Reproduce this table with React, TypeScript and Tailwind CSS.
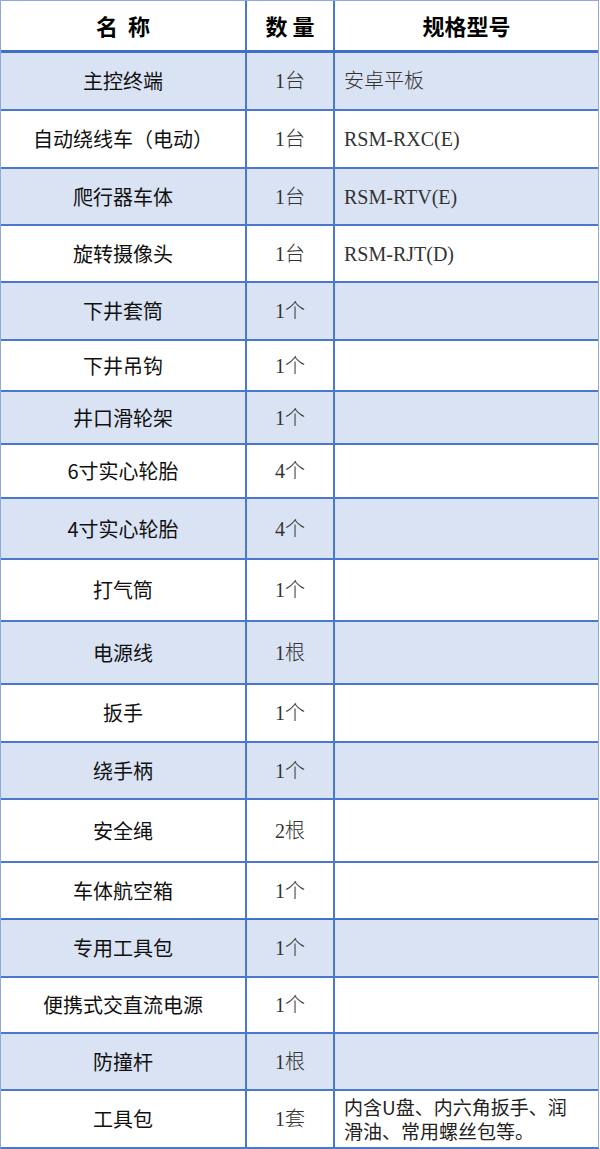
const rows: { name: string; qty: string; spec?: string; h: number; shade: boolean; thick?: boolean }[] = [
  { name: '主控终端', qty: '1台', spec: '安卓平板', h: 58, shade: true },
  { name: '自动绕线车（电动）', qty: '1台', spec: 'RSM-RXC(E)', h: 58, shade: false },
  { name: '爬行器车体', qty: '1台', spec: 'RSM-RTV(E)', h: 57, shade: true },
  { name: '旋转摄像头', qty: '1台', spec: 'RSM-RJT(D)', h: 57, shade: false },
  { name: '下井套筒', qty: '1个', h: 58, shade: true },
  { name: '下井吊钩', qty: '1个', h: 51, shade: false },
  { name: '井口滑轮架', qty: '1个', h: 53, shade: true },
  { name: '6寸实心轮胎', qty: '4个', h: 54, shade: false },
  { name: '4寸实心轮胎', qty: '4个', h: 61, shade: true },
  { name: '打气筒', qty: '1个', h: 62, shade: false },
  { name: '电源线', qty: '1根', h: 63, shade: true },
  { name: '扳手', qty: '1个', h: 58, shade: false },
  { name: '绕手柄', qty: '1个', h: 57, shade: true },
  { name: '安全绳', qty: '2根', h: 63, shade: false },
  { name: '车体航空箱', qty: '1个', h: 57, shade: false },
  { name: '专用工具包', qty: '1个', h: 59, shade: true, thick: true },
  { name: '便携式交直流电源', qty: '1个', h: 56, shade: false },
  { name: '防撞杆', qty: '1根', h: 57, shade: true },
];

const sans = 'font-["Noto_Sans_CJK_SC","Noto_Sans",sans-serif]';

export default function App() {
  return (
    <div className="w-[600px] h-[1149px] bg-white">
      <div className="w-[599px] border-l border-r border-[#8eaadb] border-b-2 border-b-[#4a78cf]">
        {/* header */}
        <div className={`grid grid-cols-[246px_88px_1fr] h-[53px] border-t border-t-[#8eaadb] border-b-[3px] border-b-[#3f6fcb] ${sans}`}>
          <div className="flex items-center justify-center border-r-2 border-[#4a78cf] text-[22px] font-bold text-black">
            名&nbsp;&nbsp;称
          </div>
          <div className="flex items-center justify-center border-r-2 border-[#4a78cf] text-[22px] font-bold text-black">
            数 量
          </div>
          <div className="flex items-center justify-center text-[22px] font-bold text-black">
            规格型号
          </div>
        </div>

        {rows.map((r) => (
          <div
            key={r.name}
            style={{ height: r.h }}
            className={`grid grid-cols-[246px_88px_1fr] border-b-2 border-[#4a78cf] ${r.shade ? 'bg-[#dae3f3]' : 'bg-white'} ${
              r.thick ? 'border-t border-t-[#3f6fcb] -mt-px' : ''
            }`}
          >
            <div className={`flex items-center justify-center border-r-2 border-[#4a78cf] text-[20px] text-[#111] ${sans}`}>
              {r.name}
            </div>
            <div className='flex items-center justify-center border-r-2 border-[#4a78cf] text-[20px] font-light text-[#333] font-["Liberation_Serif","Noto_Sans_CJK_SC",serif]'>
              {r.qty}
            </div>
            <div className='flex items-center pl-[9px] text-[20px] font-light text-[#333] font-["Liberation_Serif","Noto_Sans_CJK_SC",serif]'>
              {r.spec}
            </div>
          </div>
        ))}

        {/* last row */}
        <div className="grid grid-cols-[246px_88px_1fr] h-[56px] bg-white">
          <div className={`flex items-center justify-center border-r-2 border-[#4a78cf] text-[20px] text-[#111] ${sans}`}>
            工具包
          </div>
          <div className='flex items-center justify-center border-r-2 border-[#4a78cf] text-[20px] font-light text-[#333] font-["Liberation_Serif","Noto_Sans_CJK_SC",serif]'>
            1套
          </div>
          <div className={`flex flex-col justify-center pl-[9px] text-[19px] leading-[24px] text-[#222] ${sans}`}>
            <span>内含U盘、内六角扳手、润</span>
            <span>滑油、常用螺丝包等。</span>
          </div>
        </div>
      </div>
    </div>
  );
}
